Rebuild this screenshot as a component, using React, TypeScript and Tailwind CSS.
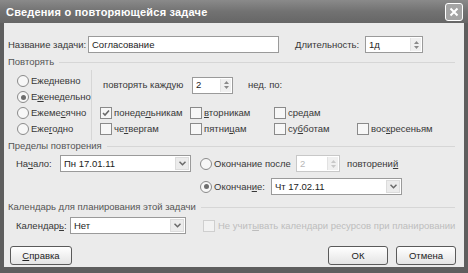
import React from "react";

const font = { fontFamily: '"Liberation Sans", Arial, sans-serif' };

function U({ children }: { children: React.ReactNode }) {
  return <span className="underline underline-offset-[1px]">{children}</span>;
}

function Radio({ checked }: { checked?: boolean }) {
  return (
    <span className="w-[12px] h-[12px] shrink-0 rounded-full border border-[#8a8a8a] bg-[#f7f7f7] flex items-center justify-center">
      {checked && <span className="w-[5px] h-[5px] rounded-full bg-[#6e6e6e]" />}
    </span>
  );
}

function Checkbox({ checked, disabled }: { checked?: boolean; disabled?: boolean }) {
  return (
    <span
      className={`w-[12px] h-[12px] shrink-0 border flex items-center justify-center ${
        disabled ? "border-[#cfcfcf] bg-[#f2f2f2]" : "border-[#8a8a8a] bg-[#f7f7f7]"
      }`}
    >
      {checked && (
        <svg width="8" height="8" viewBox="0 0 8 8">
          <path d="M1 4 L3 6 L7 1.5" fill="none" stroke="#6a6a6a" strokeWidth="1.6" />
        </svg>
      )}
    </span>
  );
}

function SpinButtons({ disabled }: { disabled?: boolean }) {
  const c = disabled ? "#c8c8c8" : "#8a8a8a";
  return (
    <span className="w-[11px] h-full flex flex-col items-center justify-center gap-[2px] bg-[#f0f0f0] border-l border-[#e2e2e2]">
      <svg width="5" height="3" viewBox="0 0 5 3">
        <path d="M0 3 L2.5 0 L5 3Z" fill={c} />
      </svg>
      <svg width="5" height="3" viewBox="0 0 5 3">
        <path d="M0 0 L2.5 3 L5 0Z" fill={c} />
      </svg>
    </span>
  );
}

function Spin({ value, w, disabled }: { value: string; w: string; disabled?: boolean }) {
  return (
    <div
      className={`${w} h-[17px] flex items-stretch border bg-white ${
        disabled ? "border-[#c8c8c8] text-[#b8b8b8]" : "border-[#9a9a9a] text-[#222]"
      }`}
    >
      <span className="flex-1 pl-[3px] flex items-center">{value}</span>
      <span className="py-[1px] pr-[1px] flex">
        <SpinButtons disabled={disabled} />
      </span>
    </div>
  );
}

function Combo({ value, w }: { value: string; w: string }) {
  return (
    <div className={`${w} h-[17px] flex items-stretch border border-[#9a9a9a] bg-white text-[#222]`}>
      <span className="flex-1 pl-[3px] flex items-center">{value}</span>
      <span className="m-[1px] w-[14px] bg-[#ececec] border border-[#dcdcdc] flex items-center justify-center">
        <svg width="7" height="5" viewBox="0 0 7 5">
          <path d="M0.5 0.8 L3.5 3.8 L6.5 0.8" fill="none" stroke="#6a6a6a" strokeWidth="1.5" />
        </svg>
      </span>
    </div>
  );
}

function GroupLabel({ children }: { children: React.ReactNode }) {
  return (
    <div className="h-[12px] flex items-center pl-[4px] pr-[9px] text-[#555]">
      <span>{children}</span>
      <span className="flex-1 h-px bg-[#d6d6d6] ml-[5px]" />
    </div>
  );
}

function Button({ children, w }: { children: React.ReactNode; w: string }) {
  return (
    <div
      className={`${w} h-[19px] rounded-[3px] border border-[#5a5a5a] bg-gradient-to-b from-[#ffffff] to-[#e4e4e4] flex items-center justify-center text-[#222]`}
    >
      {children}
    </div>
  );
}

export default function App() {
  return (
    <div className="w-[468px] h-[273px] bg-[#5e5e5e] flex flex-col text-[9.5px] leading-[12px]" style={font}>
      {/* Title bar */}
      <div className="h-[23px] flex items-center justify-between pl-[6px] pr-[5px] bg-gradient-to-b from-[#8a8a8a] via-[#727272] to-[#666666]">
        <span className="text-white font-bold text-[11px] tracking-[0.2px]">
          Сведения о повторяющейся задаче
        </span>
        <span className="w-[18px] h-[18px] rounded-[3px] border border-white bg-[#a4a4a4] flex items-center justify-center">
          <svg width="10" height="10" viewBox="0 0 10 10">
            <path d="M1.5 1.5 L8.5 8.5 M8.5 1.5 L1.5 8.5" stroke="white" strokeWidth="2" />
          </svg>
        </span>
      </div>

      {/* Body */}
      <div className="flex-1 mx-[4px] mb-[6px] bg-[#ebebeb] flex flex-col text-[#383838]">
        {/* Task name row */}
        <div className="mt-[13px] h-[17px] flex items-center">
          <span className="w-[84px] pl-[4px]">Название задачи:</span>
          <div className="w-[191px] h-[17px] border border-[#9a9a9a] bg-white flex items-center pl-[3px] text-[#222]">
            Согласование
          </div>
          <span className="ml-[16px] w-[70px]">
            <U>Д</U>лительность:
          </span>
          <Spin value="1д" w="w-[58px]" />
        </div>

        {/* Repeat group */}
        <div className="mt-[3px]">
          <GroupLabel>Повторять</GroupLabel>
        </div>
        <div className="flex">
          <div className="w-[87px] pl-[13px] pt-[5px] pb-[3px] flex flex-col">
            <div className="h-[16px] flex items-center gap-[2px]">
              <Radio />
              <span>
                Еже<U>д</U>невно
              </span>
            </div>
            <div className="h-[16px] flex items-center gap-[2px]">
              <Radio checked />
              <span>
                Е<U>ж</U>енедельно
              </span>
            </div>
            <div className="h-[16px] flex items-center gap-[2px]">
              <Radio />
              <span>
                Ежеме<U>с</U>ячно
              </span>
            </div>
            <div className="h-[16px] flex items-center gap-[2px]">
              <Radio />
              <span>
                Еже<U>г</U>одно
              </span>
            </div>
          </div>
          <div className="w-px mt-[2px] bg-[#d6d6d6]" />
          <div className="flex-1 flex flex-col">
            <div className="mt-[9px] h-[16px] flex items-center">
              <span className="ml-[11px] w-[89px]">повторять каждую</span>
              <Spin value="2" w="w-[41px]" />
              <span className="ml-[15px]">нед. по:</span>
            </div>
            <div className="mt-[12px] h-[16px] flex items-center pl-[8px]">
              <div className="w-[90px] flex items-center gap-[2px]">
                <Checkbox checked />
                <span>
                  понеде<U>л</U>ьникам
                </span>
              </div>
              <div className="w-[84px] flex items-center gap-[2px]">
                <Checkbox />
                <span>
                  <U>в</U>торникам
                </span>
              </div>
              <div className="w-[83px] flex items-center gap-[2px]">
                <Checkbox />
                <span>
                  сре<U>д</U>ам
                </span>
              </div>
            </div>
            <div className="h-[16px] flex items-center pl-[8px]">
              <div className="w-[90px] flex items-center gap-[2px]">
                <Checkbox />
                <span>
                  че<U>т</U>вергам
                </span>
              </div>
              <div className="w-[84px] flex items-center gap-[2px]">
                <Checkbox />
                <span>
                  пятни<U>ц</U>ам
                </span>
              </div>
              <div className="w-[83px] flex items-center gap-[2px]">
                <Checkbox />
                <span>
                  су<U>б</U>ботам
                </span>
              </div>
              <div className="flex items-center gap-[2px]">
                <Checkbox />
                <span>
                  вос<U>к</U>ресеньям
                </span>
              </div>
            </div>
          </div>
        </div>

        {/* Range group */}
        <GroupLabel>Пределы повторения</GroupLabel>
        <div className="mt-[3px] h-[17px] flex items-center">
          <span className="w-[56px] pl-[12px]">
            На<U>ч</U>ало:
          </span>
          <Combo value="Пн 17.01.11" w="w-[131px]" />
          <div className="ml-[9px] w-[96px] flex items-center gap-[2px]">
            <Radio />
            <span>Окончание после</span>
          </div>
          <Spin value="2" w="w-[44px]" disabled />
          <span className="ml-[7px]">
            повторени<U>й</U>
          </span>
        </div>
        <div className="mt-[6px] h-[17px] flex items-center">
          <div className="ml-[196px] w-[71px] flex items-center gap-[2px]">
            <Radio checked />
            <span>
              Окончан<U>и</U>е:
            </span>
          </div>
          <Combo value="Чт 17.02.11" w="w-[131px]" />
        </div>

        {/* Calendar group */}
        <div className="mt-[6px]">
          <GroupLabel>Календарь для планирования этой задачи</GroupLabel>
        </div>
        <div className="mt-[4px] h-[17px] flex items-center">
          <span className="w-[66px] pl-[12px]">
            Календар<U>ь</U>:
          </span>
          <Combo value="Нет" w="w-[116px]" />
          <div className="ml-[17px] flex items-center gap-[3px] text-[#bdbdbd]">
            <Checkbox disabled />
            <span>
              Не учит<U>ы</U>вать календари ресурсов при планировании
            </span>
          </div>
        </div>

        {/* Buttons */}
        <div className="mt-[12px] flex items-center pl-[6px] pr-[8px]">
          <Button w="w-[62px]">
            <span>
              <U>С</U>правка
            </span>
          </Button>
          <div className="flex-1" />
          <Button w="w-[60px]">ОК</Button>
          <div className="w-[8px]" />
          <Button w="w-[60px]">Отмена</Button>
        </div>
      </div>
    </div>
  );
}
